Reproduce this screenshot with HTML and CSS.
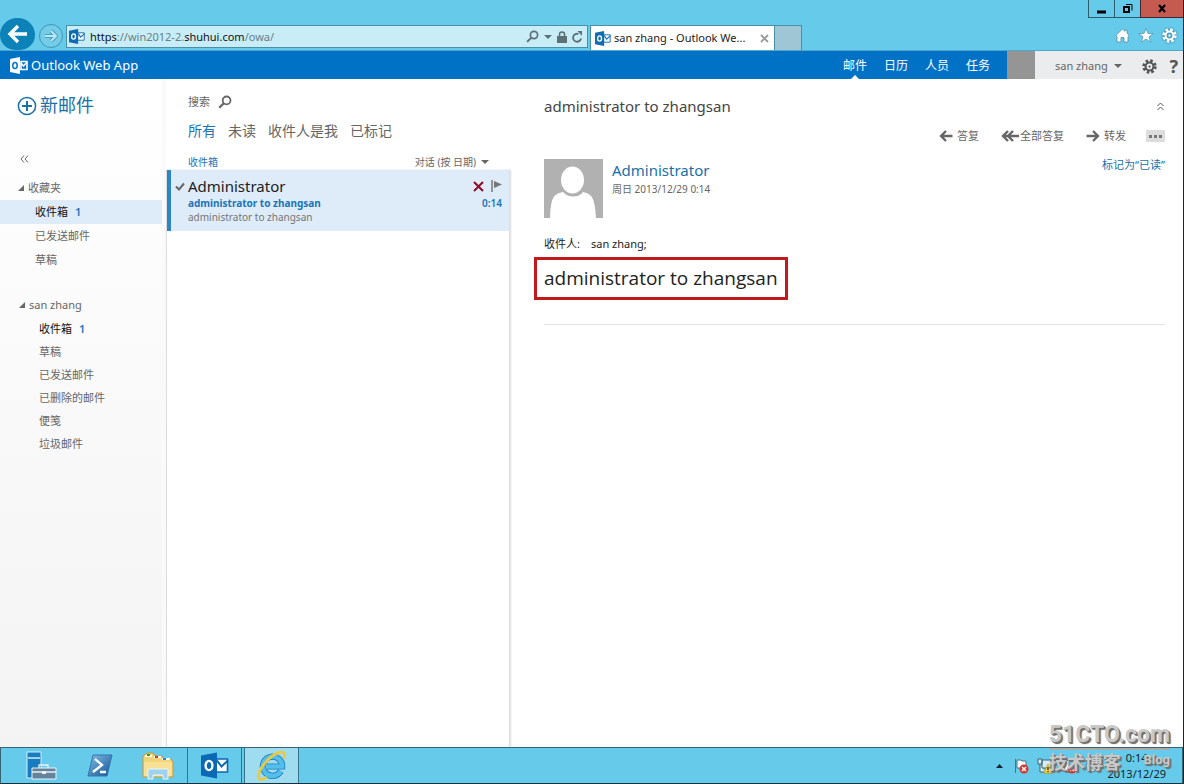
FILE: index.html
```html
<!DOCTYPE html>
<html lang="zh-CN">
<head>
<meta charset="utf-8">
<title>san zhang - Outlook Web App</title>
<link rel="stylesheet" href="styles.css">
</head>
<body>
<svg class="defs" width="0" height="0" aria-hidden="true">
  <symbol id="outlook" viewBox="0 0 28 26">
    <path fill="#fff" stroke="currentColor" stroke-width="1.6" d="M15 6.5h11.500v13H15z"/>
    <path fill="none" stroke="currentColor" stroke-width="2" d="M16 8l4.500 6L27 8"/>
    <path fill="currentColor" d="M0 3l16-3v26L0 23z"/>
    <ellipse cx="8" cy="13" rx="3.400" ry="4.600" fill="none" stroke="#fff" stroke-width="2.400"/>
  </symbol>
  <symbol id="suite-mark" viewBox="0 0 18 17">
    <path d="M0 2l10-2v17L0 15z" fill="#fff"/>
    <path d="M11 4.500h6v8h-6z" fill="none" stroke="#fff" stroke-width="1.600"/>
    <path d="M11 6l2.500 3L17 5" fill="none" stroke="#fff" stroke-width="1.500"/>
    <ellipse cx="5" cy="8.500" rx="2.200" ry="3" fill="none" stroke="#0072c6" stroke-width="1.500"/>
  </symbol>
  <symbol id="search" viewBox="0 0 14 14">
    <circle cx="8.600" cy="5.400" r="3.900" fill="none" stroke="currentColor" stroke-width="1.800"/>
    <path d="M5.800 8.200L1.200 12.800" stroke="currentColor" stroke-width="2.200"/>
  </symbol>
  <symbol id="gear" viewBox="0 0 16 16">
    <circle cx="8" cy="8" r="6.200" fill="none" stroke="currentColor" stroke-width="3" stroke-dasharray="2.700 2.170"/>
    <circle cx="8" cy="8" r="4.200" fill="none" stroke="currentColor" stroke-width="2.200"/>
    <circle cx="8" cy="8" r="1.200" fill="currentColor"/>
  </symbol>
  <symbol id="arrow" viewBox="0 0 14 12">
    <path d="M13.500 6H2.500M7 1L2 6l5 5" fill="none" stroke="currentColor" stroke-width="2.400"/>
  </symbol>
</svg>

<header class="chrome">
  <div class="window-buttons">
    <button class="win" aria-label="最小化"><svg width="10" height="10"><path d="M0 8h9" stroke="#000" stroke-width="3"/></svg></button>
    <button class="win" aria-label="还原"><svg width="10" height="10" fill="none" stroke="#000"><path d="M1 3h5v5H1z" stroke-width="2"/><path d="M3 .5h6v6" stroke-width="1"/></svg></button>
    <button class="win win-close" aria-label="关闭"><svg width="9" height="9"><path d="M1 1l6 7M7 1L1 8" stroke="#000" stroke-width="2.200"/></svg></button>
  </div>
  <div class="toolbar">
    <button class="back" aria-label="后退"><svg width="22" height="20" viewBox="0 0 22 20"><path d="M20 10H4M11 2l-8 8 8 8" fill="none" stroke="#fff" stroke-width="3.400"/></svg></button>
    <button class="forward" aria-label="前进"><svg width="14" height="14" viewBox="0 0 14 14"><path d="M1 7h10M7 2l5 5-5 5" fill="none" stroke="#4c9db9" stroke-width="4"/><path d="M1 7h10M7 2l5 5-5 5" fill="none" stroke="#b9e8f6" stroke-width="2"/></svg></button>
    <div class="address">
      <svg class="favicon"><use href="#outlook"/></svg>
      <span class="url"><b>https</b>://win2012-2.<b>shuhui.com</b>/owa/</span>
      <button class="plain" aria-label="搜索网址"><svg width="13" height="13"><use href="#search"/></svg></button>
      <span class="caret"></span>
      <svg width="10" height="12" viewBox="0 0 10 12"><path d="M2.500 6V3.500a2.500 2.500 0 0 1 5 0V6" fill="none" stroke="currentColor" stroke-width="1.600"/><path d="M0 5h10v7H0z" fill="currentColor"/></svg>
      <button class="plain" aria-label="刷新"><svg width="11" height="12" viewBox="0 0 11 12"><path d="M9 7.500A4 4 0 1 1 6.500 3" fill="none" stroke="currentColor" stroke-width="1.800"/><path d="M5.500 0H10v5z" fill="currentColor"/></svg></button>
    </div>
    <div class="tab">
      <svg class="favicon"><use href="#outlook"/></svg>
      <span class="tab-title">san zhang - Outlook We...</span>
      <button class="plain tab-close" aria-label="关闭标签"><svg width="9" height="9"><path d="M1 1l7 7M8 1L1 8" stroke="currentColor" stroke-width="1.800"/></svg></button>
    </div>
    <button class="new-tab" aria-label="新标签"></button>
    <div class="tools">
      <button class="plain" aria-label="主页"><svg width="15" height="15" viewBox="0 0 15 15"><path d="M7.500 1L.8 7.500l1.200 1V14h4v-4.500h3V14h4V8.500l1.200-1L12 5V2h-2v1.300z" fill="#fff" stroke="#4b8ea8" stroke-width=".8"/></svg></button>
      <button class="plain" aria-label="收藏"><svg width="16" height="15" viewBox="0 0 16 15"><path d="M8 .5l2 5h5.300L11 8.800l1.700 5.400L8 11l-4.700 3.200L5 8.800.7 5.500H6z" fill="#fff" stroke="#4b8ea8" stroke-width=".7"/></svg></button>
      <button class="plain white" aria-label="工具"><svg width="15" height="15"><use href="#gear"/></svg></button>
    </div>
  </div>
</header>

<div class="suite">
  <svg class="suite-logo"><use href="#suite-mark"/></svg>
  <span class="suite-name">Outlook Web App</span>
  <nav class="suite-nav">
    <a href="#" class="on">邮件</a><a href="#">日历</a><a href="#">人员</a><a href="#">任务</a>
  </nav>
  <div class="photo"></div>
  <div class="account">
    <button class="plain user">san zhang <span class="caret"></span></button>
    <button class="plain" aria-label="设置"><svg width="15" height="15"><use href="#gear"/></svg></button>
    <button class="plain help" aria-label="帮助">?</button>
  </div>
</div>

<main class="mail">
  <aside class="folders">
    <button class="plain new-mail"><svg width="20" height="20" viewBox="0 0 20 20"><circle cx="10" cy="10" r="8.600" fill="none" stroke="currentColor" stroke-width="1.500"/><path d="M10 5v10M5 10h10" stroke="currentColor" stroke-width="2"/></svg>新邮件</button>
    <button class="plain collapse" aria-label="折叠"><svg width="9" height="8"><path d="M4 .5L1 4l3 3.500M8 .5L5 4l3 3.500" fill="none" stroke="#666"/></svg></button>
    <h2 class="group"><span class="tri"></span>收藏夹</h2>
    <ul class="favorites">
      <li><a href="#" class="unread selected">收件箱<span class="count">1</span></a></li>
      <li><a href="#">已发送邮件</a></li>
      <li><a href="#">草稿</a></li>
    </ul>
    <h2 class="group mailbox"><span class="tri"></span>san zhang</h2>
    <ul class="tree">
      <li><a href="#" class="unread">收件箱<span class="count">1</span></a></li>
      <li><a href="#">草稿</a></li>
      <li><a href="#">已发送邮件</a></li>
      <li><a href="#">已删除的邮件</a></li>
      <li><a href="#">便笺</a></li>
      <li><a href="#">垃圾邮件</a></li>
    </ul>
  </aside>

  <section class="list">
    <button class="plain search">搜索<svg width="14" height="14"><use href="#search"/></svg></button>
    <nav class="filters"><a href="#" class="on">所有</a><a href="#">未读</a><a href="#">收件人是我</a><a href="#">已标记</a></nav>
    <div class="list-head"><span class="folder-name">收件箱</span><button class="plain sort">对话 (按 日期) <span class="caret"></span></button></div>
    <div class="messages">
      <article class="message">
        <svg class="tick" width="10" height="9"><path d="M1 4.500L4 7.500 9 1.500" fill="none" stroke="#666" stroke-width="2"/></svg>
        <div class="message-text">
          <div class="from">Administrator</div>
          <div class="subject">administrator to zhangsan</div>
          <div class="preview">administrator to zhangsan</div>
        </div>
        <div class="message-side">
          <div class="message-actions">
            <button class="plain" aria-label="删除"><svg width="11" height="11"><path d="M1 1l9 9M10 1L1 10" stroke="#8e0b26" stroke-width="2"/></svg></button>
            <button class="plain" aria-label="标记"><svg width="11" height="12"><path d="M1 0v12" stroke="#777" stroke-width="1.500"/><path d="M3 1l8 3.500L3 8z" fill="#777"/></svg></button>
          </div>
          <time>0:14</time>
        </div>
      </article>
    </div>
  </section>

  <section class="reading">
    <div class="title-row"><h1>administrator to zhangsan</h1><button class="plain" aria-label="收起"><svg width="7" height="9"><path d="M.5 4l3-3 3 3M.5 8l3-3 3 3" fill="none" stroke="#555"/></svg></button></div>
    <div class="actions">
      <button class="plain reply"><svg width="14" height="12"><use href="#arrow"/></svg>答复</button>
      <button class="plain reply-all"><svg width="19" height="12" viewBox="0 0 19 12"><path d="M18 6H3M7 1L2 6l5 5M12 1L7 6l5 5" fill="none" stroke="currentColor" stroke-width="2.400"/></svg>全部答复</button>
      <button class="plain next"><svg width="14" height="12" viewBox="0 0 14 12"><path d="M.5 6H11M7 1l5 5-5 5" fill="none" stroke="currentColor" stroke-width="2.400"/></svg>转发</button>
      <button class="plain more" aria-label="更多"><svg width="13" height="3"><path d="M0 0h3v3H0zM5 0h3v3H5zM10 0h3v3h-3z" fill="#777"/></svg></button>
    </div>
    <div class="sender">
      <svg class="avatar" viewBox="0 0 59 59"><path fill="#b1b1b1" d="M0 0h59v59H0z"/><ellipse cx="28.500" cy="21" rx="11.500" ry="13.500" fill="#fff"/><path fill="#fff" d="M6 59c1-18 2-24 13-26 5 6 16 6 20 0 10 2 12 8 13 26z"/></svg>
      <div class="sender-text"><a href="#" class="sender-name">Administrator</a><div class="date">周日 2013/12/29 0:14</div></div>
      <a href="#" class="mark-read">标记为“已读”</a>
    </div>
    <div class="to">收件人:<span>san zhang;</span></div>
    <div class="body-text">administrator to zhangsan</div>
    <hr>
  </section>
</main>

<footer class="taskbar">
  <div class="apps">
    <button class="app" aria-label="服务器管理器"><svg width="32" height="30" viewBox="0 0 32 30"><path d="M1 1h14v26H1z" fill="#177cc0" stroke="#d5eef8"/><path d="M2 7h12" stroke="#d5eef8" stroke-width="1.500"/><path d="M6 17h24v11H6z" fill="#64839a" stroke="#e7f2f7"/><path d="M13 17v-3h9v3M6 21h24" fill="none" stroke="#e7f2f7" stroke-width="1.300"/><path d="M16 20h4v3h-4z" fill="#eee"/></svg></button>
    <button class="app" aria-label="PowerShell"><svg width="26" height="23" viewBox="0 0 26 23"><defs><linearGradient id="ps" x2="1" y2="1"><stop stop-color="#83bfe6"/><stop offset="1" stop-color="#125198"/></linearGradient></defs><path d="M6 1h19l-5 21H1z" fill="url(#ps)" stroke="#3674a7" stroke-linejoin="round"/><path d="M8 5l7 6-9 7M13 18h6" fill="none" stroke="#fff" stroke-width="2.300"/></svg></button>
    <button class="app" aria-label="文件资源管理器"><svg width="32" height="28" viewBox="0 0 32 28"><path d="M1 4l4-3h6l2 3h7l1 3h8l2 3v15H1z" fill="#f4d477" stroke="#c59c3e"/><path d="M3 4h7M12 5h7M20 7h8" stroke="#fff" stroke-width="2"/><path d="M5 2h3v2H5z" fill="#2d9b35"/><path d="M13 4h3v2h-3z" fill="#cf3b25"/><path d="M21 6h3v2h-3z" fill="#2986cc"/><path d="M2 10h28v14H2z" fill="#f8e197"/><path d="M6 27V17h20v10h-5v-4H11v4z" fill="#9ed3f0" stroke="#e8f6fd"/></svg></button>
    <button class="app running" aria-label="Outlook"><svg class="outlook-app"><use href="#outlook"/></svg></button>
    <button class="app running active" aria-label="Internet Explorer"><svg width="30" height="30" viewBox="0 0 28 29"><path d="M22.500 19.500a9.300 9.300 0 1 1 1.300-4.500H9" fill="none" stroke="#1b7fbe" stroke-width="6"/><path d="M22.500 19.500a9.300 9.300 0 1 1 1.300-4.500H9" fill="none" stroke="#55bfec" stroke-width="4.400"/><path d="M25 7C29 0 22-1 14 5 5 12-2 24 2 27c2 1 5 0 7-2" fill="none" stroke="#edc93f" stroke-width="2.600"/></svg></button>
  </div>
  <div class="tray">
    <button class="plain" aria-label="显示隐藏的图标"><svg width="7" height="4"><path d="M0 4l3.500-4L7 4z" fill="#123"/></svg></button>
    <svg width="15" height="16" viewBox="0 0 15 16"><path d="M1.500 1v14M3 2h4l1 1h4v7H3z" fill="#fff" stroke="#4f7180"/><circle cx="10" cy="11" r="4.500" fill="#d6342c"/><path d="M8 9l4 4M12 9l-4 4" stroke="#fff" stroke-width="1.500"/></svg>
    <svg width="16" height="16" viewBox="0 0 16 16"><path d="M5 2h9v8H5zM1 1h4v5H1zM3 6v8h5" fill="#d5edf5" stroke="#416575"/><path d="M11 6l4.500 9h-9z" fill="#ffd42a" stroke="#ae8510" stroke-width=".6"/><path d="M11 9v3M11 13v1" stroke="#222" stroke-width="1.300"/></svg>
    <svg width="16" height="16" viewBox="0 0 16 16"><path d="M1 5h3l4-4v14l-4-4H1z" fill="#fff" stroke="#4f7180"/><circle cx="11" cy="11" r="4.500" fill="#d6342c"/><path d="M9 9l4 4M13 9l-4 4" stroke="#fff" stroke-width="1.500"/></svg>
    <svg width="14" height="14"><circle cx="7" cy="7" r="6" fill="#b9e3f1" stroke="#477b91"/></svg>
    <div class="clock"><span>0:14</span><span>2013/12/29</span></div>
  </div>
</footer>

<div class="watermark"><div class="wm-top">51CTO.com</div><div class="wm-bottom"><span>技术博客</span><small>Blog</small></div></div>
</body>
</html>
```

FILE: styles.css
```css
* { box-sizing: border-box; }

body {
  margin: 0;
  height: 100vh;
  display: flex;
  flex-direction: column;
  position: relative;
  overflow: hidden;
  border-right: 1px solid #1b2529;
  background: #fff;
  color: #666;
  font: 11px/16px "Noto Sans", "Noto Sans CJK SC", sans-serif;
}

.defs { position: absolute; }
a { color: inherit; text-decoration: none; }
ul { list-style: none; margin: 0; padding: 0; }
h1, h2 { margin: 0; font-weight: 400; }
svg { flex: none; display: block; }
button { font: inherit; color: inherit; padding: 0; border: 0; }
.plain { background: none; display: flex; align-items: center; }

.caret {
  flex: none;
  border: 4px solid transparent;
  border-top-color: currentColor;
  border-bottom: 0;
}

/* Browser window */
.chrome { flex: none; background: #66caea; border-bottom: 1px solid #4fa6cc; }
.window-buttons { display: flex; justify-content: flex-end; height: 18px; }
.win {
  width: 26px;
  display: grid;
  place-items: center;
  background: #66caea;
  border: 1px solid #2c5c6c;
  border-width: 0 0 1px 1px;
}
.win-close { width: 43px; background: #c55a50; border-color: #45242a; }

.toolbar { display: flex; align-items: flex-end; height: 32px; }
.back {
  flex: none;
  width: 35px;
  height: 32px;
  display: grid;
  place-items: center;
  background: #0d82b8;
  border-radius: 17px 17px 15px 15px;
}
.forward {
  flex: none;
  width: 24px;
  height: 24px;
  margin: 0 3px 2px 4px;
  display: grid;
  place-items: center;
  background: #74cde8;
  border: 1px solid #4094b4;
  border-radius: 50%;
}
.address {
  flex: 0 1 522px;
  height: 23px;
  margin: 0 2px 2px 0;
  padding: 0 4px 0 2px;
  display: flex;
  align-items: center;
  gap: 5px;
  background: #c8edf7;
  border: 1px solid #4a8fa6;
  color: #5c7078;
}
.favicon { width: 16px; height: 15px; color: #0f6cb3; }
.url { flex: 1; font-size: 11px; color: #66808a; white-space: nowrap; }
.url b { font-weight: 400; color: #111; }
.tab {
  flex: 0 0 185px;
  height: 25px;
  padding: 0 5px 0 4px;
  display: flex;
  align-items: center;
  gap: 3px;
  background: #fff;
  border: 1px solid #4a8fa6;
  border-bottom: 0;
}
.tab-title { flex: 1; font-size: 11px; color: #222; white-space: nowrap; }
.tab-close { color: #999; }
.new-tab {
  width: 27px;
  height: 25px;
  background: #9fc6d4;
  border: 1px solid #4a8fa6;
  border-width: 1px 1px 0 0;
}
.tools { margin: 0 6px 7px auto; display: flex; align-items: center; gap: 8px; }
.white { color: #fff; filter: drop-shadow(0 0 1px #2c6c86); }

/* Suite bar */
.suite { flex: none; height: 28px; display: flex; align-items: center; background: #0072c6; color: #fff; }
.suite-logo { width: 18px; height: 17px; margin: 0 3px 0 10px; }
.suite-name { font-size: 13px; }
.suite-nav { margin-left: auto; display: flex; align-self: stretch; font-size: 12px; }
.suite-nav a { position: relative; height: 28px; margin-right: 17px; line-height: 30px; }
.suite-nav .on::after {
  content: "";
  position: absolute;
  left: 50%;
  bottom: 0;
  margin-left: -4px;
  border: 4px solid transparent;
  border-top: 0;
  border-bottom-color: #fff;
}
.photo { align-self: stretch; width: 28px; background: #959595; }
.account {
  align-self: stretch;
  width: 148px;
  padding: 2px 5px 0 20px;
  display: flex;
  align-items: center;
  justify-content: space-between;
  background: #ebecee;
  color: #555;
}
.user { gap: 6px; margin-right: 8px; font-size: 11px; color: #666; }
.help { font-size: 18px; font-weight: 700; }

/* Mail layout */
.mail {
  flex: 1;
  min-height: 0;
  display: grid;
  grid-template-columns: 166px 344px 1fr;
}

.folders {
  padding-top: 14px;
  background: linear-gradient(#fff, #f3f3f3);
  border-right: 4px solid #fafafa;
}
.new-mail { margin-left: 17px; gap: 3px; font-size: 18px; line-height: 24px; color: #1a70a8; }
.new-mail svg { margin-top: 2px; }
.collapse { margin: 36px 0 11px 20px; height: 12px; }
.group { display: flex; align-items: center; height: 24px; padding-left: 18px; gap: 4px; font-size: 11px; }
.tri { border: 3px solid transparent; border-right-color: #666; border-bottom-color: #666; }
.folders li a { display: flex; align-items: center; }
.favorites a { height: 24px; padding-left: 35px; }
.tree a { height: 23px; padding-left: 39px; }
.folders .unread { color: #111; }
.count { margin-left: 7px; color: #1a74b8; font-weight: 600; }
.selected { background: #deebf9; }
.mailbox { margin-top: 21px; padding-left: 19px; }

.list { display: flex; flex-direction: column; padding-top: 15px; }
.search { margin-left: 22px; gap: 8px; align-self: flex-start; }
.filters { display: flex; gap: 12px; margin: 10px 0 0 22px; font-size: 14px; line-height: 22px; }
.filters .on, .folder-name { color: #1a74b8; }
.list-head { display: flex; justify-content: space-between; margin: 12px 21px 0 22px; font-size: 10px; }
.sort { gap: 5px; }
.messages { flex: 1; border: 1px solid #ddd; border-width: 0 1px; box-shadow: 1px 0 2px #ddd; }
.message {
  display: flex;
  padding: 6px 7px 7px 4px;
  gap: 3px;
  background: #deebf9;
  border-left: 4px solid #2c86c5;
}
.tick { margin-top: 6px; }
.message-text { flex: 1; font-size: 10px; line-height: 14px; color: #777; }
.from { font-size: 15px; line-height: 20px; color: #222; }
.subject, time { color: #1a74b8; font-weight: 700; }
.message-side { display: flex; flex-direction: column; align-items: flex-end; font-size: 10px; line-height: 14px; }
.message-actions { display: flex; align-items: center; gap: 7px; height: 20px; }
.message-side time { font-weight: 600; }

.reading { padding: 15px 18px 0 34px; }
.title-row { display: flex; align-items: center; justify-content: space-between; }
.title-row h1 { font-size: 15px; line-height: 24px; color: #444; }
.title-row button { margin-right: 1px; }
.actions { display: flex; justify-content: flex-end; align-items: center; margin-top: 10px; }
.actions button { gap: 4px; }
.reply, .reply-all { margin-right: 22px; }
.reply-all svg { margin-right: -4px; }
.next { margin-right: 20px; }
.more { width: 19px; height: 12px; justify-content: center; background: #ddd; }
.sender { display: flex; align-items: flex-start; margin-top: 15px; gap: 9px; }
.avatar { width: 59px; height: 59px; }
.sender-text { flex: 1; font-size: 10px; line-height: 16px; }
.sender-name { display: block; font-size: 15px; line-height: 22px; color: #1a70a8; }
.mark-read { margin-top: -2px; color: #1a70a8; }
.to { margin-top: 18px; color: #222; }
.to span { margin-left: 11px; }
.body-text {
  width: fit-content;
  margin: 5px 0 0 -10px;
  padding: 4px 7px 5px;
  border: 3px solid #c01a1d;
  font: 19px/28px "Open Sans", sans-serif;
  color: #222;
}
hr { margin: 24px 0 0; border: 0; border-top: 1px solid #e3e3e3; }

/* Taskbar */
.taskbar {
  flex: none;
  height: 37px;
  display: flex;
  justify-content: space-between;
  background: #66caea;
  border: 1px solid #356474;
  border-bottom-color: #17313b;
  color: #10242c;
}
.apps { display: flex; padding-left: 12px; }
.app { width: 58px; display: grid; place-items: center; background: none; }
.running { width: 55px; border: 1px solid #35718a; border-width: 0 1px; }
.active { margin-left: 2px; background: #a0dcf0; }
.outlook-app { width: 28px; height: 27px; color: #0a68b5; }
.tray { display: flex; align-items: center; gap: 8px; padding-right: 16px; }
.tray button { margin-right: 3px; }
.clock { display: flex; flex-direction: column; align-items: center; line-height: 16px; font-size: 11px; }

.watermark {
  position: absolute;
  right: 13px;
  bottom: 8px;
  color: #c9c9c9;
  font-family: Roboto, "Noto Sans CJK SC", sans-serif;
  font-weight: 700;
  text-shadow: 1px 1px 0 #777, 2px 2px 1px #666;
}
.wm-top { font-size: 23px; line-height: 27px; border-bottom: 2px solid #aaa; }
.wm-bottom { display: flex; justify-content: space-between; font-size: 18px; line-height: 26px; }
.wm-bottom small { font-size: 13px; line-height: 20px; }
```
